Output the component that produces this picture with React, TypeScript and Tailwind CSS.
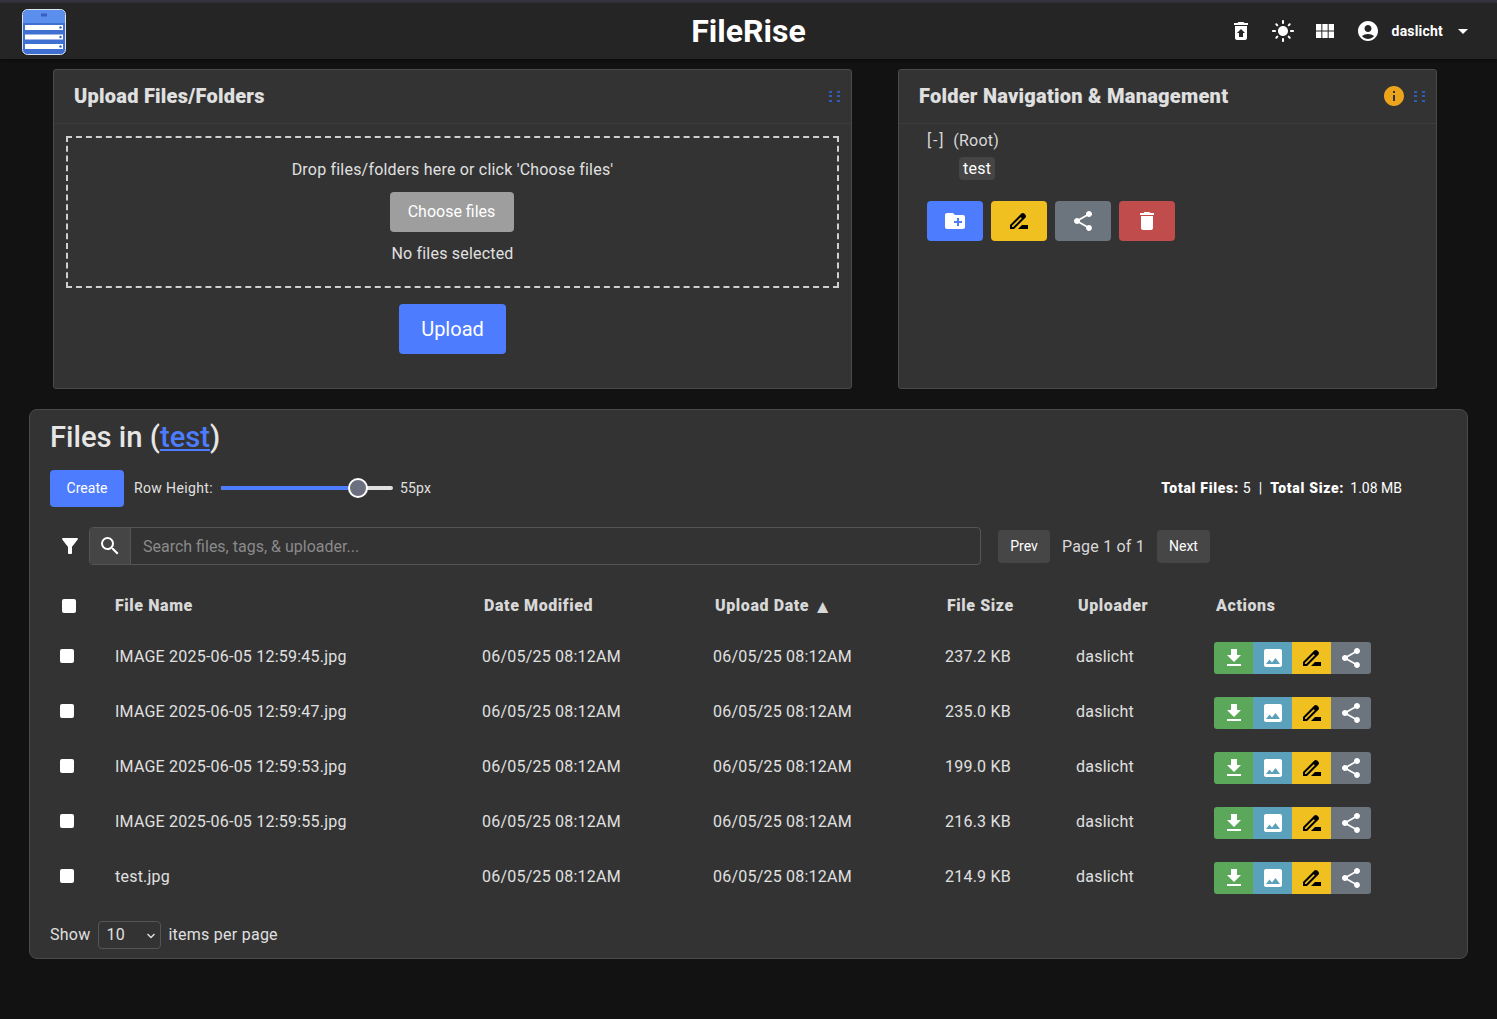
import {
  MdAccountCircle,
  MdArrowDropDown,
  MdCreateNewFolder,
  MdDelete,
  MdDriveFileRenameOutline,
  MdFileDownload,
  MdFilterAlt,
  MdImage,
  MdInfo,
  MdLightMode,
  MdRestoreFromTrash,
  MdSearch,
  MdShare,
  MdViewModule,
} from "react-icons/md";

const files = [
  { name: "IMAGE 2025-06-05 12:59:45.jpg", size: "237.2 KB" },
  { name: "IMAGE 2025-06-05 12:59:47.jpg", size: "235.0 KB" },
  { name: "IMAGE 2025-06-05 12:59:53.jpg", size: "199.0 KB" },
  { name: "IMAGE 2025-06-05 12:59:55.jpg", size: "216.3 KB" },
  { name: "test.jpg", size: "214.9 KB" },
];

const gridCols = "grid grid-cols-[65px_367px_231px_232px_131px_138px_1fr] items-center";

function Logo() {
  return (
    <svg width="44" height="46" viewBox="0 0 44 46" className="mt-[2px]">
      <rect x="0.5" y="0.5" width="43" height="45" rx="5" fill="#3f6fd0" stroke="#dbe3ee" />
      <path d="M1 14 V6 a5 5 0 0 1 5 -5 H38 a5 5 0 0 1 5 5 V14 Z" fill="#5a8fee" />
      <rect x="19" y="4.5" width="6" height="3" fill="#3560c0" />
      <rect x="3" y="16" width="38" height="5" fill="#ffffff" />
      <rect x="3" y="25.5" width="38" height="5" fill="#ffffff" />
      <rect x="3" y="35" width="38" height="5" fill="#ffffff" />
      <circle cx="38.5" cy="18.5" r="1.2" fill="#3560c0" />
      <circle cx="38.5" cy="28" r="1.2" fill="#3560c0" />
      <circle cx="38.5" cy="37.5" r="1.2" fill="#3560c0" />
    </svg>
  );
}

function DragDots() {
  return (
    <div className="grid grid-cols-2 gap-x-[5px] gap-y-[2.5px]">
      {[0, 1, 2, 3, 4, 5].map((i) => (
        <span key={i} className="h-[2px] w-[3px] bg-[#2f5cb8]" />
      ))}
    </div>
  );
}

function CardHead({ title, children }: { title: string; children?: React.ReactNode }) {
  return (
    <div className="flex h-[54px] items-center justify-between border-b border-[#3d3d3d] pb-[1px] pl-5 pr-[11px]">
      <h2 className="text-[20px] font-black tracking-[0.25px] text-[#e0e0e0]">{title}</h2>
      <div className="flex items-center">{children}</div>
    </div>
  );
}

function FolderButton({ color, children }: { color: string; children: React.ReactNode }) {
  return (
    <button className={`flex h-10 w-14 items-center justify-center rounded ${color}`}>{children}</button>
  );
}

export default function App() {
  return (
    <div className="min-h-[1019px] bg-[#121212] font-['Roboto',sans-serif] text-[#e0e0e0]">
      <div className="h-[3px] bg-[#34343e]" />
      <header className="relative flex h-[56px] items-center justify-between bg-[#252525] pl-[22px] pr-[22px] shadow-[0_1px_3px_rgba(0,0,0,0.5)]">
        <Logo />
        <h1 className="absolute left-0 right-0 top-[8px] text-center text-[32px] font-bold leading-[40px] text-white">
          FileRise
        </h1>
        <div className="flex items-center text-white">
          <MdRestoreFromTrash size={24} />
          <MdLightMode size={24} className="ml-[18px]" />
          <MdViewModule size={24} className="ml-[18px]" />
          <MdAccountCircle size={24} className="ml-[19px]" />
          <span className="ml-[12px] text-[14px] font-bold tracking-[0.2px]">daslicht</span>
          <MdArrowDropDown size={24} className="ml-2" />
        </div>
      </header>

      <div className="ml-[53px] mt-[10px] flex w-[1384px] justify-between">
        <section className="h-[320px] w-[799px] rounded-[3px] border border-[#4a4a4a] bg-[#333333]">
          <CardHead title="Upload Files/Folders">
            <DragDots />
          </CardHead>
          <div className="mx-3 mt-3 flex h-[152px] flex-col items-center border-2 border-dashed border-[#cfcfcf] pt-[22px]">
            <p className="text-[16px] leading-[20px] tracking-[0.2px]">Drop files/folders here or click 'Choose files'</p>
            <button className="mr-[2px] mt-[12px] h-10 w-[124px] rounded bg-[#9e9e9e] text-[16px] text-white">Choose files</button>
            <p className="mt-[10px] text-[16px] leading-[24px] tracking-[0.2px]">No files selected</p>
          </div>
          <div className="mt-4 flex justify-center">
            <button className="h-[50px] w-[107px] rounded bg-[#4d7cfe] text-[20px] text-white">Upload</button>
          </div>
        </section>

        <section className="h-[320px] w-[539px] rounded-[3px] border border-[#4a4a4a] bg-[#333333]">
          <CardHead title="Folder Navigation & Management">
            <MdInfo size={24} className="text-[#eca41c]" />
            <div className="ml-[8px]">
              <DragDots />
            </div>
          </CardHead>
          <div className="pl-7 tracking-[0.22px]">
            <div className="mt-[4px] flex h-[26px] items-center text-[16px] text-[#d8d8d8]">
              <span className="tracking-[1.8px]">[-]</span>
              <span className="ml-[8px]">(Root)</span>
            </div>
            <div className="ml-[32px] mt-[3px] w-fit rounded bg-[#454545] px-1 text-[16px] leading-[23px] text-white">test</div>
            <div className="mt-[21px] flex gap-2">
              <FolderButton color="bg-[#4d7cfe]"><MdCreateNewFolder size={24} className="text-white" /></FolderButton>
              <FolderButton color="bg-[#f0c020]"><MdDriveFileRenameOutline size={24} className="text-black" /></FolderButton>
              <FolderButton color="bg-[#6c757d]"><MdShare size={24} className="text-white" /></FolderButton>
              <FolderButton color="bg-[#c14c4c]"><MdDelete size={24} className="text-white" /></FolderButton>
            </div>
          </div>
        </section>
      </div>

      <main className="ml-[29px] mt-5 h-[550px] w-[1439px] rounded-lg border border-[#4a4a4a] bg-[#333333] pl-5 pt-[7px]">
        <h2 className="text-[29.2px] font-medium leading-[40px] text-[#e6e6e6]">
          Files in (<span className="text-[#4d7cfe] underline">test</span>)
        </h2>

        <div className="mt-[13px] flex h-[37px] items-center pr-[65px] text-[14px]">
          <button className="h-[37px] w-[74px] rounded bg-[#4d7cfe] text-white">Create</button>
          <span className="ml-[10px] tracking-[0.36px]">Row Height:</span>
          <div className="relative mb-[1px] ml-2 h-1 w-[172px] rounded-full bg-[#e0e0e0]">
            <div className="h-1 w-[130px] rounded-full bg-[#4d7cfe]" />
            <div className="absolute left-[127px] top-[-8px] h-5 w-5 rounded-full border-2 border-white bg-[#6c6f80]" />
          </div>
          <span className="ml-[7px] tracking-[0.2px]">55px</span>
          <div className="ml-auto flex text-white">
            <b className="font-black tracking-[0.7px]">Total Files:</b>
            <span className="ml-[4px]">5</span>
            <span className="mx-[8px]">|</span>
            <b className="font-black tracking-[0.7px]">Total Size:</b>
            <span className="ml-[6px]">1.08 MB</span>
          </div>
        </div>

        <div className="mt-[20px] flex h-[38px] items-center">
          <MdFilterAlt size={24} className="ml-2 text-white" />
          <div className="ml-[7px] flex h-[38px] w-[892px] overflow-hidden rounded border border-[#555555]">
            <div className="flex w-[41px] items-center justify-center border-r border-[#555555] bg-[#454545]">
              <MdSearch size={24} className="text-white" />
            </div>
            <input
              className="min-w-0 flex-1 bg-transparent pl-3 pt-[1px] text-[16px] placeholder:text-[#8a8a8a]"
              placeholder="Search files, tags, & uploader..."
            />
          </div>
          <button className="ml-[17px] h-[33px] w-[52px] rounded bg-[#464646] text-[14px] text-white">Prev</button>
          <span className="ml-3 pt-[1px] text-[16px] tracking-[0.2px] text-[#d8d8d8]">Page 1 of 1</span>
          <button className="ml-3 h-[33px] w-[53px] rounded bg-[#464646] text-[14px] text-white">Next</button>
        </div>

        <div className={`${gridCols} mb-[3px] mt-[21px] h-[40px] text-[16px] font-black tracking-[0.6px] text-[#d8d8d8]`}>
          <div className="pl-3"><input type="checkbox" className="block h-[14px] w-[14px] appearance-none rounded-[2px] bg-white" /></div>
          <div>File Name</div>
          <div className="pl-[2px]">Date Modified</div>
          <div className="flex items-center pl-[2px]">Upload Date<span className="ml-[4px] text-[19px] leading-none">▲</span></div>
          <div className="pl-[2px]">File Size</div>
          <div className="pl-[2px]">Uploader</div>
          <div className="pl-[2px]">Actions</div>
        </div>

        {files.map((f) => (
          <div key={f.name} className={`${gridCols} h-[55px] text-[16px] tracking-[0.22px] text-[#e0e0e0]`}>
            <div className="mb-[2px] pl-[10px]"><input type="checkbox" className="block h-[14px] w-[14px] appearance-none rounded-[2px] bg-white" /></div>
            <div>{f.name}</div>
            <div>06/05/25 08:12AM</div>
            <div>06/05/25 08:12AM</div>
            <div>{f.size}</div>
            <div>daslicht</div>
            <div className="mt-[3px] flex h-8 w-[157px] overflow-hidden rounded-[3px]">
              <span className="flex w-[39px] items-center justify-center bg-[#5ba85a]"><MdFileDownload size={24} className="text-white" /></span>
              <span className="flex w-[39px] items-center justify-center bg-[#5ba1bc]"><MdImage size={24} className="text-white" /></span>
              <span className="flex w-[39px] items-center justify-center bg-[#f0c020]"><MdDriveFileRenameOutline size={24} className="text-black" /></span>
              <span className="flex w-[40px] items-center justify-center bg-[#6c757d]"><MdShare size={24} className="text-white" /></span>
            </div>
          </div>
        ))}

        <div className="mt-[17px] flex h-7 items-center text-[16px] tracking-[0.25px]">
          <span>Show</span>
          <div className="relative ml-2 flex h-7 w-[63px] items-center rounded border border-[#555555] pl-[7px]">
            10
            <svg className="absolute right-[4px] top-[10px]" width="10" height="8" viewBox="0 0 10 8">
              <path d="M1.5 2 L5 5.5 L8.5 2" fill="none" stroke="#e0e0e0" strokeWidth="1.4" />
            </svg>
          </div>
          <span className="ml-[7px]">items per page</span>
        </div>
      </main>
    </div>
  );
}
